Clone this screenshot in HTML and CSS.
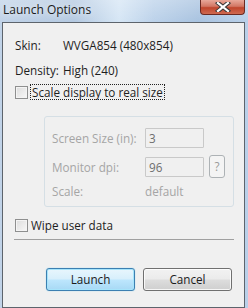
FILE: index.html
```html
<!DOCTYPE html>
<html lang="en">
<head>
    <meta charset="UTF-8">
    <title>Launch Options</title>
    <link rel="stylesheet" href="styles.css">
</head>
<body>
    <div class="window">
        <div class="titlebar">
            <span class="title">Launch Options</span>
            <div class="closeBtn">
                <svg width="16" height="10" viewBox="0 0 16 10">
                    <path d="M3 1 L13 9 M13 1 L3 9" stroke="#3a3a3a" stroke-width="4.2" stroke-linecap="square"/>
                    <path d="M3 1 L13 9 M13 1 L3 9" stroke="#ffffff" stroke-width="2.2" stroke-linecap="square"/>
                </svg>
            </div>
        </div>
        <div class="client">
            <div class="row info">
                <span class="key">Skin:</span>
                <span>WVGA854 (480x854)</span>
            </div>
            <div class="row info">
                <span class="key">Density:</span>
                <span>High (240)</span>
            </div>
            <label class="check focused">
                <span class="box"></span>
                <span class="lbl">Scale display to real size</span>
            </label>

            <div class="group">
                <div class="grow">
                    <span class="glabel">Screen Size (in):</span>
                    <span class="field">3</span>
                </div>
                <div class="grow tall">
                    <span class="glabel">Monitor dpi:</span>
                    <span class="field">96</span>
                    <span class="qBtn">?</span>
                </div>
                <div class="grow">
                    <span class="glabel">Scale:</span>
                    <span class="gval">default</span>
                </div>
            </div>

            <label class="check wipe">
                <span class="box"></span>
                <span class="lbl">Wipe user data</span>
            </label>

            <hr class="sep">

            <div class="buttons">
                <span class="btn primary">Launch</span>
                <span class="btn">Cancel</span>
            </div>
        </div>
    </div>
</body>
</html>
```

FILE: styles.css
```css
body{
    margin: 0;
    font-family: "Open Sans", "Noto Sans", sans-serif;
    font-size: 11.7px;
    color: #1e1e1e;
}
.window{
    width: 248px;
    height: 308px;
    box-sizing: border-box;
    padding: 0 3px 3px 2px;
    background: linear-gradient(90deg, #c1d3e8 0%, #b4c9e1 30%, #d6e6f5 48%, #bcd2ea 62%, #a9c3e0 80%, #b9d0e9 100%);
}
.titlebar{
    height: 22px;
    display: flex;
    align-items: flex-start;
    justify-content: space-between;
    background: linear-gradient(180deg, rgba(255,255,255,0.25), rgba(255,255,255,0));
    margin: 0 -3px 0 -2px;
}
.title{
    margin: 1px 0 0 3px;
    font-size: 12px;
    color: #1b1b1b;
    text-shadow: 0 0 6px rgba(255,255,255,0.9);
}
.closeBtn{
    width: 45px;
    height: 15px;
    margin-right: 3px;
    box-sizing: border-box;
    border: 1px solid #6b2a22;
    border-top: none;
    border-radius: 0 0 4px 4px;
    background: linear-gradient(180deg, #e8a89a 0%, #d27764 45%, #c0452c 55%, #cf6a50 100%);
    display: flex;
    align-items: center;
    justify-content: center;
}
.client{
    height: 286px;
    box-sizing: border-box;
    border: 1px solid #5d646c;
    background: #f0f0f0;
    padding: 14px 11px 0 12px;
}
.row{
    display: flex;
    height: 16px;
    line-height: 16px;
}
.info + .info{
    margin-top: 9px;
}
.key{
    width: 48px;
}
.check{
    display: flex;
    align-items: center;
    height: 16px;
}
.focused{
    margin-top: 6px;
}
.box{
    width: 11px;
    height: 11px;
    border: 1px solid #8e8f8f;
    background: linear-gradient(135deg, #dcdcdc, #f8f8f8);
    box-shadow: inset 0 0 0 1px #f4f4f4;
    margin-right: 2px;
}
.lbl{
    padding: 0 1px;
    line-height: 14px;
}
.focused .lbl{
    border: 1px dotted #222;
}
.group{
    margin: 16px 0 0 29px;
    width: 190px;
    height: 91px;
    box-sizing: border-box;
    border: 1px solid #d5dfe5;
    border-radius: 3px;
    padding: 11px 0 0 7px;
    color: #a5a5a5;
}
.grow{
    display: flex;
    align-items: center;
    height: 20px;
}
.grow.tall{
    height: 23px;
    margin-top: 7px;
}
.grow:last-child{
    height: 16px;
    margin-top: 5px;
}
.glabel{
    width: 93px;
}
.field{
    width: 59px;
    height: 20px;
    box-sizing: border-box;
    border: 1px solid #c9c9c9;
    border-radius: 1px;
    padding-left: 3px;
    line-height: 18px;
    color: #6e6e6e;
}
.qBtn{
    width: 16px;
    height: 23px;
    box-sizing: border-box;
    margin-left: 5px;
    border: 1px solid #adb2b5;
    border-radius: 3px;
    background: #f4f4f4;
    text-align: center;
    line-height: 20px;
    color: #9a9a9a;
}
.gval{
    color: #a5a5a5;
}
.wipe{
    margin-top: 10px;
}
.sep{
    margin: 6px 0 0 -1px;
    width: 220px;
    border: none;
    border-top: 1px solid #a0a0a0;
    height: 0;
}
.buttons{
    display: flex;
    gap: 8px;
    margin: 28px 0 0 31px;
}
.btn{
    width: 89px;
    height: 23px;
    box-sizing: border-box;
    border: 1px solid #707070;
    border-radius: 3px;
    background: linear-gradient(180deg, #f2f2f2 0%, #ebebeb 48%, #dddddd 52%, #cfcfcf 100%);
    box-shadow: inset 0 0 0 1px rgba(255,255,255,0.8);
    text-align: center;
    line-height: 21px;
    color: #1b1b1b;
}
.primary{
    border-color: #3c7fb1;
    background: linear-gradient(180deg, #e8f6fd 0%, #d7effc 48%, #bde6fd 52%, #a7d9f5 100%);
    box-shadow: inset 0 0 0 1px #a6e4fb, 0 0 1px #5fc8f0;
}
```
